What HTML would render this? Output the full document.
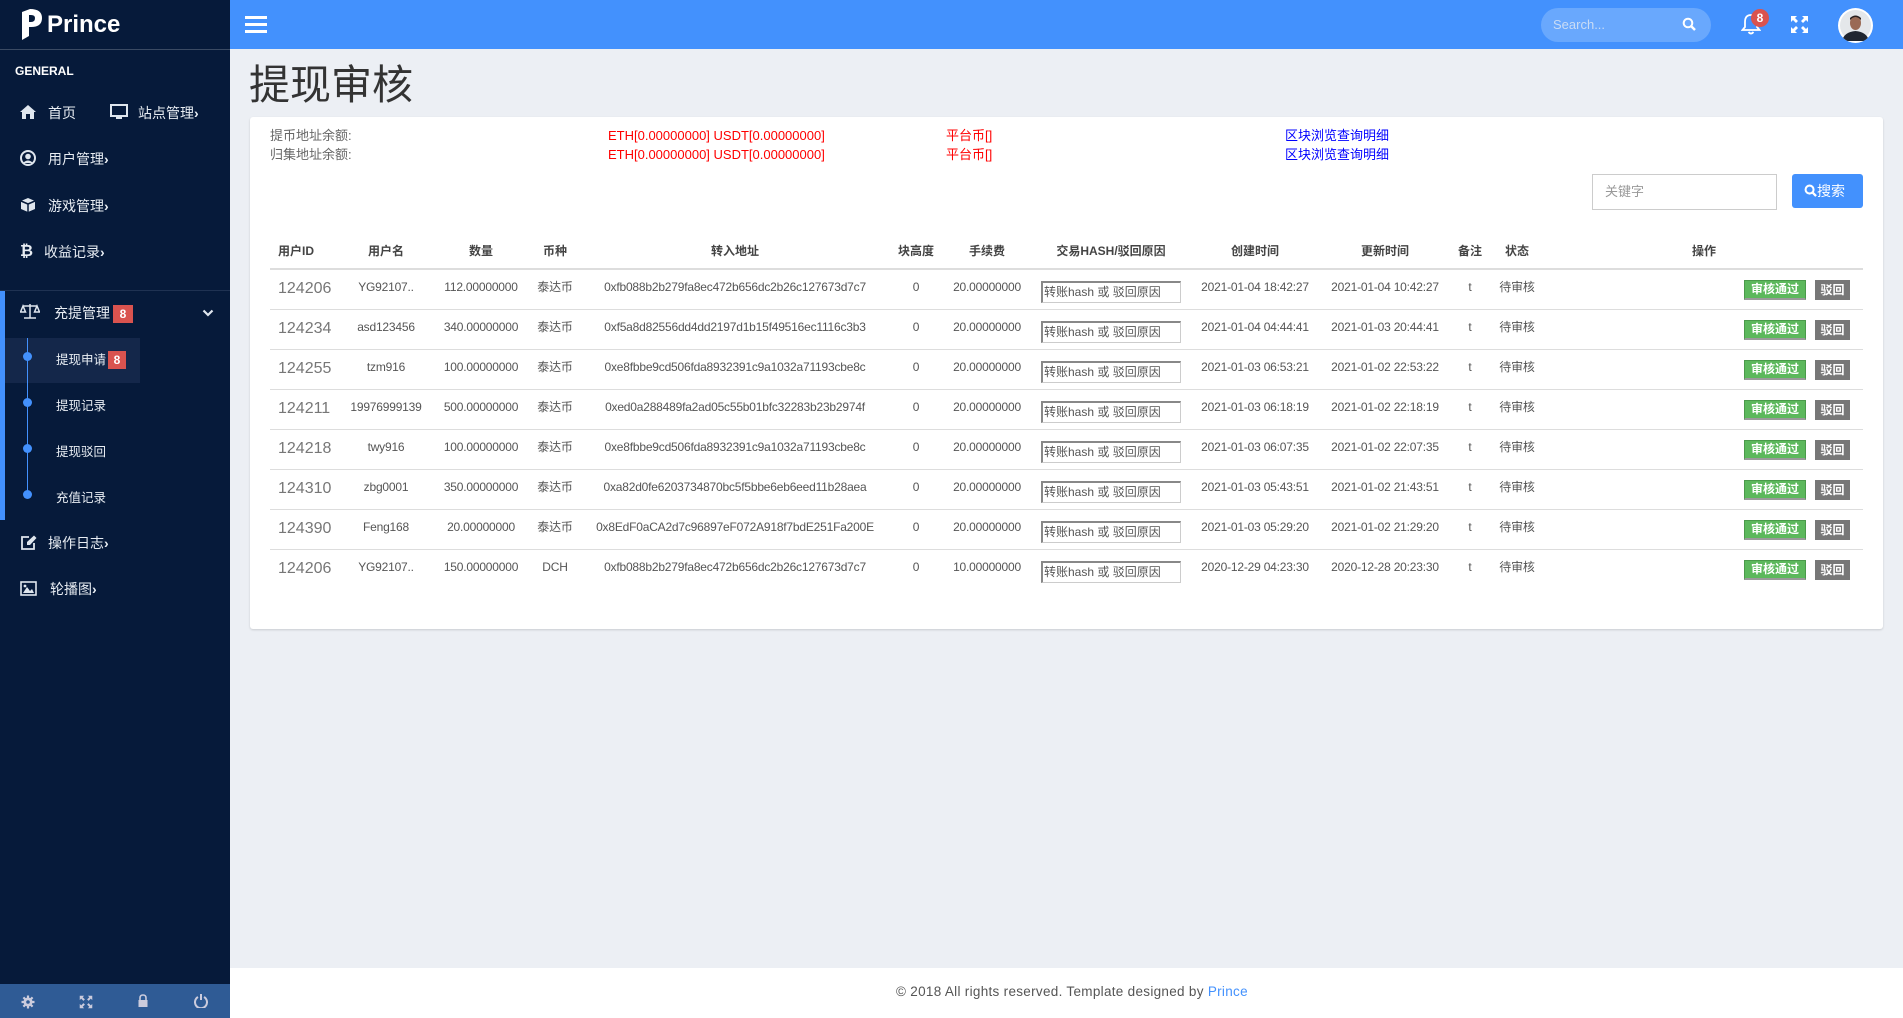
<!DOCTYPE html>
<html><head><meta charset="utf-8">
<style>
*{margin:0;padding:0;box-sizing:border-box}
body{width:1903px;height:1018px;overflow:hidden;background:#eceff4;font-family:"Liberation Sans","Noto Sans CJK SC",sans-serif;position:relative;color:#555}
.sb{position:absolute;left:0;top:0;width:230px;height:1018px;background:#061a3a;color:#e8edf3}
.sb .it{position:absolute;font-size:14px;white-space:nowrap;line-height:18px}
.ic{position:absolute}
.top{position:absolute;left:230px;top:0;width:1673px;height:49px;background:#4391fd}
.ab{position:absolute;white-space:nowrap}
.card{position:absolute;left:250px;top:117px;width:1633px;height:512px;background:#fff;border-radius:3px;box-shadow:0 1px 2px rgba(0,0,0,.15)}
.r{position:absolute;left:270px;width:1593px;height:40px;border-bottom:1px solid #ddd;font-size:12px;color:#555}
.r .c{position:absolute;top:10px;line-height:15px;height:15px;transform:translateX(-50%);white-space:nowrap;letter-spacing:-0.2px}
.r .id{position:absolute;left:8px;top:10px;font-size:16px;line-height:18px;color:#777}
.r .in{position:absolute;left:771px;top:11px;width:140px;height:22px;border:1px solid #ccc;border-left:2px solid #888;border-top:2px solid #888;font-size:12px;line-height:16px;color:#555;padding:1px 0 0 1px;white-space:nowrap}
.r .ok{position:absolute;left:1474px;top:10px;width:62px;height:20px;background:#5cb85c;border:1px solid #4a9a4a;border-bottom:2px solid #999;color:#fff;font-size:12px;font-weight:bold;text-align:center;line-height:17px}
.r .no{position:absolute;left:1545px;top:10px;width:35px;height:20px;background:#777;color:#fff;font-size:12px;font-weight:bold;text-align:center;line-height:20px}
.h{position:absolute;left:270px;top:240px;width:1593px;height:30px;border-bottom:2px solid #ddd;font-size:12px;color:#444;font-weight:bold}
.h .c{position:absolute;top:4px;line-height:15px;transform:translateX(-50%);white-space:nowrap}
.inf{position:absolute;white-space:nowrap;font-size:13px;line-height:16px}
</style></head><body>
<div class="sb">
  <svg class="ic" style="left:20px;top:8px" width="24" height="34" viewBox="0 0 24 34"><path d="M2 4 L10 1 Q22 1 22 10 Q22 19 11 19 L9 19 L9 28 L2 32 Z M9 7 L9 14 L11 14 Q15 14 15 10 Q15 7 11 7 Z" fill="#fff" fill-rule="evenodd"/></svg>
  <div class="it" style="left:47px;top:11px;font-size:24px;line-height:28px;font-weight:bold;color:#fff">Prince</div>
  <div style="position:absolute;left:0;top:49px;width:230px;height:1px;background:#3a4a63"></div>
  <div class="it" style="left:15px;top:62px;font-size:12px;font-weight:bold;color:#fff">GENERAL</div>
  <svg class="ic" style="left:20px;top:105px" width="16" height="14" viewBox="0 0 16 14"><path d="M8 0 L16 7 L14 7 L14 14 L10 14 L10 9 L6 9 L6 14 L2 14 L2 7 L0 7 Z" fill="#dfe6ee"/></svg>
  <div class="it" style="left:48px;top:104px">首页</div>
  <svg class="ic" style="left:110px;top:104px" width="18" height="16" viewBox="0 0 18 16"><rect x="1" y="1" width="16" height="11" fill="none" stroke="#dfe6ee" stroke-width="2"/><rect x="6" y="13" width="6" height="2" fill="#dfe6ee"/></svg>
  <div class="it" style="left:138px;top:104px">站点管理<b>›</b></div>
  <svg class="ic" style="left:20px;top:150px" width="16" height="16" viewBox="0 0 16 16"><circle cx="8" cy="8" r="7" fill="none" stroke="#dfe6ee" stroke-width="2"/><circle cx="8" cy="6.5" r="2.8" fill="#dfe6ee"/><path d="M3 13 Q8 8 13 13" fill="#dfe6ee"/></svg>
  <div class="it" style="left:48px;top:150px">用户管理<b>›</b></div>
  <svg class="ic" style="left:20px;top:197px" width="16" height="16" viewBox="0 0 16 16"><path d="M8 1 L15 4 L15 12 L8 15 L1 12 L1 4 Z" fill="#dfe6ee"/><path d="M1 4 L8 7 L15 4 M8 7 L8 15" stroke="#061a3a" stroke-width="1.5" fill="none"/></svg>
  <div class="it" style="left:48px;top:197px">游戏管理<b>›</b></div>
  <div class="it" style="left:20px;top:243px;font-weight:bold;font-size:16px">₿</div>
  <div class="it" style="left:44px;top:243px">收益记录<b>›</b></div>
  <div style="position:absolute;left:0;top:290px;width:230px;height:1px;background:#1f3252"></div>
  <div style="position:absolute;left:0;top:291px;width:5px;height:229px;background:#4391fd"></div>
  <svg class="ic" style="left:20px;top:303px" width="20" height="16" viewBox="0 0 20 16"><path d="M10 1 L10 15 M4 15 L16 15 M3 3 L17 3 M3 3 L0.5 9 L5.5 9 Z M17 3 L14.5 9 L19.5 9 Z" stroke="#dfe6ee" stroke-width="1.5" fill="none"/></svg>
  <div class="it" style="left:54px;top:304px">充提管理</div>
  <div class="ab" style="left:113px;top:305px;width:20px;height:18px;background:#d9534f;color:#fff;font-size:12px;font-weight:bold;text-align:center;line-height:18px">8</div>
  <svg class="ic" style="left:202px;top:309px" width="12" height="8" viewBox="0 0 12 8"><path d="M1.5 1.5 L6 6 L10.5 1.5" stroke="#dfe6ee" stroke-width="2.2" fill="none"/></svg>
  <div style="position:absolute;left:5px;top:338px;width:135px;height:45px;background:#14274a"></div>
  <div style="position:absolute;left:27px;top:338px;width:1px;height:160px;background:#4391fd"></div>
  <div style="position:absolute;left:23px;top:352px;width:9px;height:9px;border-radius:50%;background:#4391fd"></div>
  <div style="position:absolute;left:23px;top:398px;width:9px;height:9px;border-radius:50%;background:#4391fd"></div>
  <div style="position:absolute;left:23px;top:444px;width:9px;height:9px;border-radius:50%;background:#4391fd"></div>
  <div style="position:absolute;left:23px;top:490px;width:9px;height:9px;border-radius:50%;background:#4391fd"></div>
  <div class="it" style="left:56px;top:351px;font-size:12.5px">提现申请</div>
  <div class="ab" style="left:108px;top:351px;width:18px;height:18px;background:#d9534f;color:#fff;font-size:12px;font-weight:bold;text-align:center;line-height:18px">8</div>
  <div class="it" style="left:56px;top:397px;font-size:12.5px">提现记录</div>
  <div class="it" style="left:56px;top:443px;font-size:12.5px">提现驳回</div>
  <div class="it" style="left:56px;top:489px;font-size:12.5px">充值记录</div>
  <svg class="ic" style="left:20px;top:535px" width="17" height="16" viewBox="0 0 17 16"><path d="M9 2 L2 2 L2 14 L14 14 L14 8" stroke="#dfe6ee" stroke-width="1.8" fill="none"/><path d="M7 10 L7 7 L14 0.5 L16.5 3 L10 10 Z" fill="#dfe6ee"/></svg>
  <div class="it" style="left:48px;top:534px">操作日志<b>›</b></div>
  <svg class="ic" style="left:20px;top:581px" width="17" height="15" viewBox="0 0 17 15"><rect x="1" y="1" width="15" height="13" fill="none" stroke="#dfe6ee" stroke-width="1.6"/><path d="M3 12 L7 6 L10 10 L12 8 L14 12 Z" fill="#dfe6ee"/><circle cx="5" cy="5" r="1.4" fill="#dfe6ee"/></svg>
  <div class="it" style="left:50px;top:580px">轮播图<b>›</b></div>
  <div style="position:absolute;left:0;top:984px;width:230px;height:34px;background:#2f5b95"></div>
  <svg class="ic" style="left:21px;top:995px" width="14" height="14" viewBox="0 0 14 14"><circle cx="7" cy="7" r="4.5" fill="#ccd"/><path d="M7 0.5 L7 13.5 M0.5 7 L13.5 7 M2.4 2.4 L11.6 11.6 M11.6 2.4 L2.4 11.6" stroke="#ccd" stroke-width="2.2"/><circle cx="7" cy="7" r="1.8" fill="#2f5b95"/></svg>
  <svg class="ic" style="left:79px;top:995px" width="14" height="14" viewBox="0 0 19 19"><path d="M1 1 L7 1 L5 3 L8 6 L6 8 L3 5 L1 7 Z M18 1 L18 7 L16 5 L13 8 L11 6 L14 3 L12 1 Z M1 18 L1 12 L3 14 L6 11 L8 13 L5 16 L7 18 Z M18 18 L12 18 L14 16 L11 13 L13 11 L16 14 L18 12 Z" fill="#ccd"/></svg>
  <svg class="ic" style="left:138px;top:994px" width="10" height="13" viewBox="0 0 10 13"><path d="M2 6 L2 4 Q2 1 5 1 Q8 1 8 4 L8 6" stroke="#ccd" stroke-width="1.6" fill="none"/><rect x="0.5" y="6" width="9" height="7" fill="#ccd"/></svg>
  <svg class="ic" style="left:194px;top:993px" width="14" height="15" viewBox="0 0 14 15"><path d="M4 4 A6 6 0 1 0 10 4" stroke="#ccd" stroke-width="2" fill="none"/><path d="M7 1 L7 7" stroke="#ccd" stroke-width="2"/></svg>
</div>
<div class="top">
  <div style="position:absolute;left:15px;top:16px;width:22px;height:3px;background:#fff"></div>
  <div style="position:absolute;left:15px;top:23px;width:22px;height:3px;background:#fff"></div>
  <div style="position:absolute;left:15px;top:30px;width:22px;height:3px;background:#fff"></div>
  <div style="position:absolute;left:1311px;top:8px;width:170px;height:34px;border-radius:17px;background:#69a8fd"></div>
  <div class="ab" style="left:1323px;top:17px;font-size:13px;color:#c9dcf5">Search...</div>
  <svg class="ic" style="left:1452px;top:17px" width="14" height="14" viewBox="0 0 14 14"><circle cx="6" cy="6" r="4.3" stroke="#fff" stroke-width="2" fill="none"/><path d="M9 9 L13 13" stroke="#fff" stroke-width="2.5"/></svg>
  <svg class="ic" style="left:1511px;top:13px" width="20" height="22" viewBox="0 0 20 22"><path d="M10 2 Q4 2 4 9 L4 14 L1.5 17 L18.5 17 L16 14 L16 9 Q16 2 10 2 Z" stroke="#fff" stroke-width="1.8" fill="none"/><path d="M7.5 19 Q10 22 12.5 19" stroke="#fff" stroke-width="1.8" fill="none"/></svg>
  <div class="ab" style="left:1521px;top:9px;width:18px;height:18px;border-radius:50%;background:#d9534f;color:#fff;font-size:12px;font-weight:bold;text-align:center;line-height:18px">8</div>
  <svg class="ic" style="left:1560px;top:15px" width="19" height="19" viewBox="0 0 19 19"><path d="M1 1 L7 1 L5 3 L8 6 L6 8 L3 5 L1 7 Z M18 1 L18 7 L16 5 L13 8 L11 6 L14 3 L12 1 Z M1 18 L1 12 L3 14 L6 11 L8 13 L5 16 L7 18 Z M18 18 L12 18 L14 16 L11 13 L13 11 L16 14 L18 12 Z" fill="#fff"/></svg>
  <div style="position:absolute;left:1608px;top:8px;width:35px;height:35px;border-radius:50%;background:#fff;padding:2px;overflow:hidden">
    <svg width="31" height="31" viewBox="0 0 31 31"><circle cx="15.5" cy="15.5" r="15.5" fill="#e4e7ea"/><path d="M2 31 Q4 22 15.5 21 Q27 22 29 31 Z" fill="#1f2530"/><ellipse cx="15.5" cy="13" rx="5.5" ry="7" fill="#9a6a55"/><path d="M10 10 Q15.5 4 21 10 L21 8 Q15.5 3 10 8 Z" fill="#2a2020"/></svg>
  </div>
</div>
<div class="ab" style="left:249px;top:60px;font-size:41px;line-height:50px;color:#333">提现审核</div>
<div class="card"></div>
<div class="inf" style="left:270px;top:128px;color:#666">提币地址余额:</div>
<div class="inf" style="left:270px;top:147px;color:#666">归集地址余额:</div>
<div class="inf" style="left:608px;top:128px;color:#f00">ETH[0.00000000] USDT[0.00000000]</div>
<div class="inf" style="left:608px;top:147px;color:#f00">ETH[0.00000000] USDT[0.00000000]</div>
<div class="inf" style="left:946px;top:128px;color:#f00">平台币[]</div>
<div class="inf" style="left:946px;top:147px;color:#f00">平台币[]</div>
<div class="inf" style="left:1285px;top:128px;color:#00f">区块浏览查询明细</div>
<div class="inf" style="left:1285px;top:147px;color:#00f">区块浏览查询明细</div>
<div class="ab" style="left:1592px;top:174px;width:185px;height:36px;border:1px solid #ccc;font-size:13px;line-height:16px;color:#999;padding:9px 0 0 12px">关键字</div>
<div class="ab" style="left:1792px;top:174px;width:71px;height:34px;border-radius:3px;background:#4391fd;color:#fff;font-size:14px;line-height:18px;padding:8px 0 0 12px"><svg width="13" height="13" viewBox="0 0 14 14" style="vertical-align:-1px"><circle cx="6" cy="6" r="4.3" stroke="#fff" stroke-width="2.2" fill="none"/><path d="M9 9 L13 13" stroke="#fff" stroke-width="2.5"/></svg>搜索</div>

<div class="h">
  <div class="c" style="left:8px;transform:none">用户ID</div>
  <div class="c" style="left:116px">用户名</div>
  <div class="c" style="left:211px">数量</div>
  <div class="c" style="left:285px">币种</div>
  <div class="c" style="left:465px">转入地址</div>
  <div class="c" style="left:646px">块高度</div>
  <div class="c" style="left:717px">手续费</div>
  <div class="c" style="left:841px">交易HASH/驳回原因</div>
  <div class="c" style="left:985px">创建时间</div>
  <div class="c" style="left:1115px">更新时间</div>
  <div class="c" style="left:1200px">备注</div>
  <div class="c" style="left:1247px">状态</div>
  <div class="c" style="left:1434px">操作</div>
</div>

<div class="r" style="top:270px"><div class="id">124206</div><div class="c" style="left:116px">YG92107..</div><div class="c" style="left:211px">112.00000000</div><div class="c" style="left:285px">泰达币</div><div class="c" style="left:465px">0xfb088b2b279fa8ec472b656dc2b26c127673d7c7</div><div class="c" style="left:646px">0</div><div class="c" style="left:717px">20.00000000</div><div class="in">转账hash 或 驳回原因</div><div class="c" style="left:985px">2021-01-04 18:42:27</div><div class="c" style="left:1115px">2021-01-04 10:42:27</div><div class="c" style="left:1200px">t</div><div class="c" style="left:1247px">待审核</div><div class="ok">审核通过</div><div class="no">驳回</div></div>
<div class="r" style="top:310px"><div class="id">124234</div><div class="c" style="left:116px">asd123456</div><div class="c" style="left:211px">340.00000000</div><div class="c" style="left:285px">泰达币</div><div class="c" style="left:465px">0xf5a8d82556dd4dd2197d1b15f49516ec1116c3b3</div><div class="c" style="left:646px">0</div><div class="c" style="left:717px">20.00000000</div><div class="in">转账hash 或 驳回原因</div><div class="c" style="left:985px">2021-01-04 04:44:41</div><div class="c" style="left:1115px">2021-01-03 20:44:41</div><div class="c" style="left:1200px">t</div><div class="c" style="left:1247px">待审核</div><div class="ok">审核通过</div><div class="no">驳回</div></div>
<div class="r" style="top:350px"><div class="id">124255</div><div class="c" style="left:116px">tzm916</div><div class="c" style="left:211px">100.00000000</div><div class="c" style="left:285px">泰达币</div><div class="c" style="left:465px">0xe8fbbe9cd506fda8932391c9a1032a71193cbe8c</div><div class="c" style="left:646px">0</div><div class="c" style="left:717px">20.00000000</div><div class="in">转账hash 或 驳回原因</div><div class="c" style="left:985px">2021-01-03 06:53:21</div><div class="c" style="left:1115px">2021-01-02 22:53:22</div><div class="c" style="left:1200px">t</div><div class="c" style="left:1247px">待审核</div><div class="ok">审核通过</div><div class="no">驳回</div></div>
<div class="r" style="top:390px"><div class="id">124211</div><div class="c" style="left:116px">19976999139</div><div class="c" style="left:211px">500.00000000</div><div class="c" style="left:285px">泰达币</div><div class="c" style="left:465px">0xed0a288489fa2ad05c55b01bfc32283b23b2974f</div><div class="c" style="left:646px">0</div><div class="c" style="left:717px">20.00000000</div><div class="in">转账hash 或 驳回原因</div><div class="c" style="left:985px">2021-01-03 06:18:19</div><div class="c" style="left:1115px">2021-01-02 22:18:19</div><div class="c" style="left:1200px">t</div><div class="c" style="left:1247px">待审核</div><div class="ok">审核通过</div><div class="no">驳回</div></div>
<div class="r" style="top:430px"><div class="id">124218</div><div class="c" style="left:116px">twy916</div><div class="c" style="left:211px">100.00000000</div><div class="c" style="left:285px">泰达币</div><div class="c" style="left:465px">0xe8fbbe9cd506fda8932391c9a1032a71193cbe8c</div><div class="c" style="left:646px">0</div><div class="c" style="left:717px">20.00000000</div><div class="in">转账hash 或 驳回原因</div><div class="c" style="left:985px">2021-01-03 06:07:35</div><div class="c" style="left:1115px">2021-01-02 22:07:35</div><div class="c" style="left:1200px">t</div><div class="c" style="left:1247px">待审核</div><div class="ok">审核通过</div><div class="no">驳回</div></div>
<div class="r" style="top:470px"><div class="id">124310</div><div class="c" style="left:116px">zbg0001</div><div class="c" style="left:211px">350.00000000</div><div class="c" style="left:285px">泰达币</div><div class="c" style="left:465px">0xa82d0fe6203734870bc5f5bbe6eb6eed11b28aea</div><div class="c" style="left:646px">0</div><div class="c" style="left:717px">20.00000000</div><div class="in">转账hash 或 驳回原因</div><div class="c" style="left:985px">2021-01-03 05:43:51</div><div class="c" style="left:1115px">2021-01-02 21:43:51</div><div class="c" style="left:1200px">t</div><div class="c" style="left:1247px">待审核</div><div class="ok">审核通过</div><div class="no">驳回</div></div>
<div class="r" style="top:510px"><div class="id">124390</div><div class="c" style="left:116px">Feng168</div><div class="c" style="left:211px">20.00000000</div><div class="c" style="left:285px">泰达币</div><div class="c" style="left:465px">0x8EdF0aCA2d7c96897eF072A918f7bdE251Fa200E</div><div class="c" style="left:646px">0</div><div class="c" style="left:717px">20.00000000</div><div class="in">转账hash 或 驳回原因</div><div class="c" style="left:985px">2021-01-03 05:29:20</div><div class="c" style="left:1115px">2021-01-02 21:29:20</div><div class="c" style="left:1200px">t</div><div class="c" style="left:1247px">待审核</div><div class="ok">审核通过</div><div class="no">驳回</div></div>
<div class="r" style="top:550px;border-bottom:none"><div class="id">124206</div><div class="c" style="left:116px">YG92107..</div><div class="c" style="left:211px">150.00000000</div><div class="c" style="left:285px">DCH</div><div class="c" style="left:465px">0xfb088b2b279fa8ec472b656dc2b26c127673d7c7</div><div class="c" style="left:646px">0</div><div class="c" style="left:717px">10.00000000</div><div class="in">转账hash 或 驳回原因</div><div class="c" style="left:985px">2020-12-29 04:23:30</div><div class="c" style="left:1115px">2020-12-28 20:23:30</div><div class="c" style="left:1200px">t</div><div class="c" style="left:1247px">待审核</div><div class="ok">审核通过</div><div class="no">驳回</div></div>

<div style="position:absolute;left:230px;top:968px;width:1673px;height:50px;background:#fff"></div>
<div class="ab" style="left:896px;top:984px;font-size:13.5px;line-height:16px;color:#555;letter-spacing:0.3px">© 2018 All rights reserved. Template designed by <span style="color:#4391fd">Prince</span></div>
</body></html>
